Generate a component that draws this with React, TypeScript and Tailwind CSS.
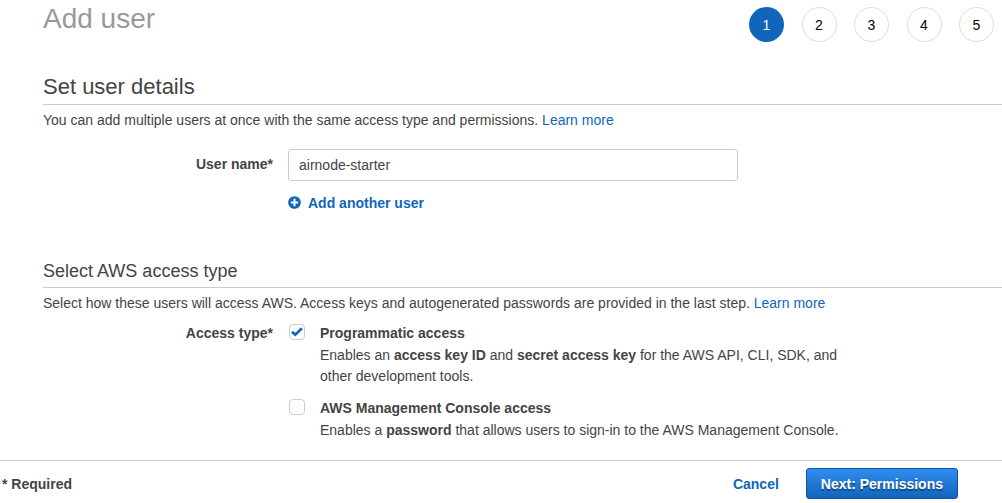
import { useState } from "react";
import type { ReactNode } from "react";
import { FaPlusCircle } from "react-icons/fa";

const steps = [1, 2, 3, 4, 5];

function Steps({ current }: { current: number }) {
  return (
    <ol className="mt-[7px] flex w-[245px] shrink-0 justify-between">
      {steps.map((step) => (
        <li
          key={step}
          aria-current={step === current ? "step" : undefined}
          className={
            step === current
              ? "flex size-[35px] items-center justify-center rounded-full bg-[#1166bb] text-white"
              : "flex size-[35px] items-center justify-center rounded-full border border-[#dddddd] text-black"
          }
        >
          {step}
        </li>
      ))}
    </ol>
  );
}

type OptionProps = { id: string; title: string; initial: boolean; children: ReactNode };

function AccessOption({ id, title, initial, children }: OptionProps) {
  const [checked, setChecked] = useState(initial);
  return (
    <div className="flex gap-[15px]">
      <span className="relative ml-px mt-[2px] size-4 shrink-0">
        <input
          id={id}
          type="checkbox"
          checked={checked}
          onChange={(e) => setChecked(e.target.checked)}
          className="block size-4 appearance-none rounded border border-[#cccccc] bg-white"
        />
        {checked && (
          <svg viewBox="0 0 16 16" className="pointer-events-none absolute inset-0 size-4" aria-hidden="true">
            <path d="M2.9 7.7 6.3 10.7 12.9 4.3" fill="none" stroke="#1166bb" strokeWidth="2.7" />
          </svg>
        )}
      </span>
      <div>
        <label htmlFor={id} className="block font-bold leading-[22px]">
          {title}
        </label>
        <p className="pt-px leading-[21px]">{children}</p>
      </div>
    </div>
  );
}

export default function App() {
  const [name, setName] = useState("airnode-starter");
  return (
    <div className="flex min-h-screen flex-col bg-white font-['Liberation_Sans',Arial,sans-serif] text-sm text-[#444444]">
      <header className="flex items-start justify-between pl-[43px] pr-2">
        <h1 className="text-[28px] leading-[38px] text-[#999999]">Add user</h1>
        <Steps current={1} />
      </header>

      <main className="grow pb-[19px] pl-[43px] pt-[31px]">
        <section>
          <h2 className="border-b border-[#cccccc] pb-[3px] text-[22px] leading-7">Set user details</h2>
          <p className="pt-[5px]">
            You can add multiple users at once with the same access type and permissions.{" "}
            <a href="#users" className="text-[#1166bb]">Learn more</a>
          </p>
          <div className="mt-[19px] flex gap-[15px]">
            <label htmlFor="user-name" className="w-[230px] shrink-0 text-right font-bold leading-[30px]">
              User name*
            </label>
            <div className="w-full max-w-[450px]">
              <input
                id="user-name"
                type="text"
                value={name}
                onChange={(e) => setName(e.target.value)}
                className="block h-8 w-full rounded-[3px] border border-[#cccccc] bg-white px-[10px]"
              />
              <button type="button" className="mt-3 flex items-center gap-[7px] font-bold text-[#1166bb]">
                <FaPlusCircle className="mb-[2px] size-[13px]" aria-hidden="true" />
                Add another user
              </button>
            </div>
          </div>
        </section>

        <section className="mt-[46px]">
          <h3 className="border-b border-[#cccccc] pb-1 text-lg leading-6">Select AWS access type</h3>
          <p className="pt-[5px]">
            Select how these users will access AWS. Access keys and autogenerated passwords are provided in the last
            step. <a href="#access" className="text-[#1166bb]">Learn more</a>
          </p>
          <div role="group" aria-labelledby="access-type" className="mt-[9px] flex gap-[15px]">
            <span id="access-type" className="w-[230px] shrink-0 text-right font-bold leading-[22px]">
              Access type*
            </span>
            <div className="flex max-w-[560px] flex-col gap-[10px]">
              <AccessOption id="programmatic" title="Programmatic access" initial={true}>
                Enables an <b>access key ID</b> and <b>secret access key</b> for the AWS API, CLI, SDK, and other
                development tools.
              </AccessOption>
              <AccessOption id="console" title="AWS Management Console access" initial={false}>
                Enables a <b>password</b> that allows users to sign-in to the AWS Management Console.
              </AccessOption>
            </div>
          </div>
        </section>
      </main>

      <footer className="flex items-center justify-between border-t border-[#cccccc] pb-1 pl-[2px] pr-11 pt-[7px] font-bold">
        <span>* Required</span>
        <div className="flex items-center gap-[27px]">
          <a href="#cancel" className="text-[#1166bb]">Cancel</a>
          <button
            type="button"
            className="h-[31px] rounded-[3px] border border-[#0f549e] bg-linear-to-b from-[#2f8df0] to-[#1166bb] px-[14px] text-white text-shadow-[0_2px_1px_rgb(0_0_0/0.4)]"
          >
            Next: Permissions
          </button>
        </div>
      </footer>
    </div>
  );
}
